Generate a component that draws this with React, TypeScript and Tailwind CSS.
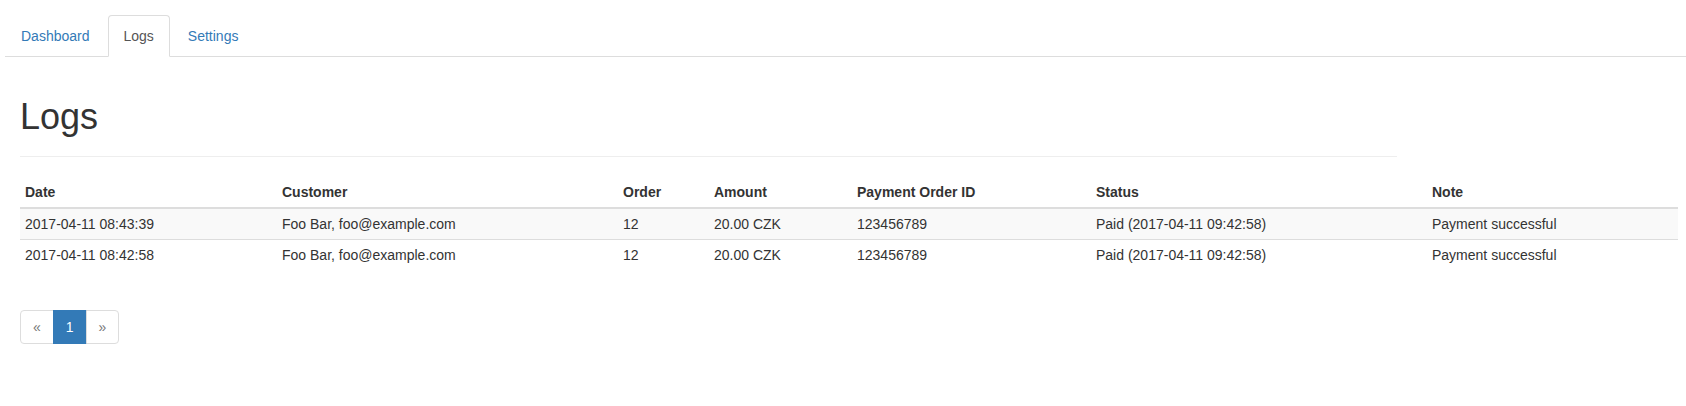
const COLUMNS = [
  { label: 'Date', width: 'w-[257px]' },
  { label: 'Customer', width: 'w-[341px]' },
  { label: 'Order', width: 'w-[91px]' },
  { label: 'Amount', width: 'w-[143px]' },
  { label: 'Payment Order ID', width: 'w-[239px]' },
  { label: 'Status', width: 'w-[336px]' },
  { label: 'Note', width: 'w-[251px]' },
];

const ROWS = [
  ['2017-04-11 08:43:39', 'Foo Bar, foo@example.com', '12', '20.00 CZK', '123456789', 'Paid (2017-04-11 09:42:58)', 'Payment successful'],
  ['2017-04-11 08:42:58', 'Foo Bar, foo@example.com', '12', '20.00 CZK', '123456789', 'Paid (2017-04-11 09:42:58)', 'Payment successful'],
];

const TABS = ['Dashboard', 'Logs', 'Settings'];

export default function App() {
  const active = 'Logs';

  return (
    <div className="min-h-[406px] bg-white font-['Liberation_Sans',Arial,sans-serif] text-[14px] leading-[20px] text-[#333]">
      <div className="pt-[15px] pl-[5px]">
        <ul className="flex border-b border-[#ddd]">
          {TABS.map((t) => (
            <li key={t} className="-mb-px mr-[2px]">
              {t === active ? (
                <a className="block px-[15px] py-[10px] border border-[#ddd] border-b-transparent rounded-t-[4px] bg-white text-[#555] cursor-default">
                  {t}
                </a>
              ) : (
                <a href="#" className="block px-[15px] py-[10px] border border-transparent rounded-t-[4px] text-[#337ab7] hover:bg-[#eee]">
                  {t}
                </a>
              )}
            </li>
          ))}
        </ul>
      </div>

      <div className="pl-[20px] pr-[8px]">
        <div className="w-[1377px] mt-[40px] mb-[20px] pb-[9px] border-b border-[#eee]">
          <h1 className="text-[36px] leading-[1.1] font-medium mb-[10px]">Logs</h1>
        </div>

        <table className="w-full table-fixed border-collapse">
          <thead>
            <tr>
              {COLUMNS.map((c) => (
                <th key={c.label} className={`${c.width} text-left align-bottom font-bold p-[5px] border-b-2 border-[#ddd]`}>
                  {c.label}
                </th>
              ))}
            </tr>
          </thead>
          <tbody>
            {ROWS.map((row, i) => (
              <tr key={i} className={i % 2 === 0 ? 'bg-[#f9f9f9]' : ''}>
                {row.map((cell, j) => (
                  <td key={j} className="p-[5px] border-t border-[#ddd] align-top">
                    {cell}
                  </td>
                ))}
              </tr>
            ))}
          </tbody>
        </table>

        <ul className="inline-flex mt-[40px]">
          <li>
            <span className="block px-[12px] py-[6px] border border-[#ddd] rounded-l-[4px] text-[#777] bg-white">«</span>
          </li>
          <li>
            <span className="block -ml-px px-[12px] py-[6px] border border-[#337ab7] bg-[#337ab7] text-white">1</span>
          </li>
          <li>
            <span className="block -ml-px px-[12px] py-[6px] border border-[#ddd] rounded-r-[4px] text-[#777] bg-white">»</span>
          </li>
        </ul>
      </div>
    </div>
  );
}
